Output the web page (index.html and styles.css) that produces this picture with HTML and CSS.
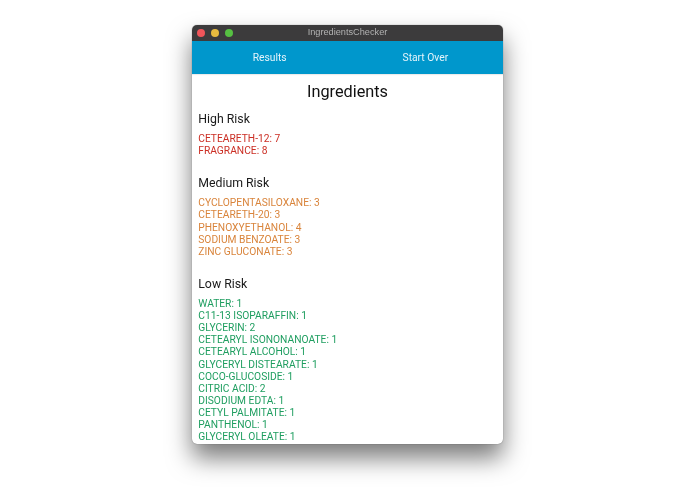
FILE: index.html
```html
<!DOCTYPE html>
<html lang="en">
<head>
<meta charset="utf-8">
<title>IngredientsChecker</title>
<link rel="stylesheet" href="styles.css">
</head>
<body>
<div class="window">
  <header class="titlebar">
    <div class="lights">
      <span class="light red"></span>
      <span class="light yellow"></span>
      <span class="light green"></span>
    </div>
    <div class="title">IngredientsChecker</div>
  </header>
  <nav class="nav">
    <a class="tab">Results</a>
    <a class="tab">Start Over</a>
  </nav>
  <main class="content">
    <h1 class="heading">Ingredients</h1>
    <section class="group high">
      <h2>High Risk</h2>
      <ul>
        <li>CETEARETH-12: 7</li>
        <li>FRAGRANCE: 8</li>
      </ul>
    </section>
    <section class="group medium">
      <h2>Medium Risk</h2>
      <ul>
        <li>CYCLOPENTASILOXANE: 3</li>
        <li>CETEARETH-20: 3</li>
        <li>PHENOXYETHANOL: 4</li>
        <li>SODIUM BENZOATE: 3</li>
        <li>ZINC GLUCONATE: 3</li>
      </ul>
    </section>
    <section class="group low">
      <h2>Low Risk</h2>
      <ul>
        <li>WATER: 1</li>
        <li>C11-13 ISOPARAFFIN: 1</li>
        <li>GLYCERIN: 2</li>
        <li>CETEARYL ISONONANOATE: 1</li>
        <li>CETEARYL ALCOHOL: 1</li>
        <li>GLYCERYL DISTEARATE: 1</li>
        <li>COCO-GLUCOSIDE: 1</li>
        <li>CITRIC ACID: 2</li>
        <li>DISODIUM EDTA: 1</li>
        <li>CETYL PALMITATE: 1</li>
        <li>PANTHENOL: 1</li>
        <li>GLYCERYL OLEATE: 1</li>
      </ul>
    </section>
  </main>
</div>
</body>
</html>
```
FILE: styles.css
```css
html, body {
  margin: 0;
  height: 100%;
  background: #fff;
  overflow: hidden;
}
body {
  display: flex;
  justify-content: center;
  align-items: flex-start;
  padding: 25px 0 0 0;
  box-sizing: border-box;
  font-family: Roboto, "Liberation Sans", sans-serif;
}
.window {
  width: 311.5px;
  height: 419px;
  border-radius: 5px;
  overflow: hidden;
  background: #fff;
  display: flex;
  flex-direction: column;
  box-shadow: 0 0 1px rgba(0,0,0,.6), 0 14px 24px rgba(0,0,0,.52);
  filter: blur(.25px);
}
.titlebar {
  flex: 0 0 15.5px;
  display: flex;
  align-items: center;
  background: #3c3b3c;
  position: relative;
}
.lights {
  display: flex;
  gap: 6px;
  padding-left: 5px;
}
.light {
  width: 8px;
  height: 8px;
  border-radius: 50%;
}
.red { background: #f0555a; }
.yellow { background: #e8bb3f; }
.green { background: #56c042; }
.title {
  position: absolute;
  inset: 0;
  text-align: center;
  font-size: 9.2px;
  line-height: 15.5px;
  color: #b2b2b2;
  font-family: "Liberation Sans", sans-serif;
}
.nav {
  flex: 0 0 33px;
  display: flex;
  background: #0097cc;
  box-shadow: 0 1px 1px rgba(0,0,0,.08);
}
.tab {
  flex: 1;
  text-align: center;
  font-size: 10.3px;
  line-height: 33px;
  color: #e4f4fb;
}
.content {
  flex: 1;
  min-height: 0;
  overflow: hidden;
  padding: 0 6.5px;
  color: #1a1a1a;
}
.heading {
  margin: 8.5px 0 0;
  font-size: 16.3px;
  line-height: 20px;
  font-weight: 400;
  text-align: center;
  color: #111;
}
.group {
  margin-bottom: 17.7px;
}
.group h2 {
  margin: 0;
  font-size: 12.3px;
  line-height: 16px;
  font-weight: 400;
}
.heading + .group { margin-top: 8.5px; }
.group ul {
  list-style: none;
  margin: 6.5px 0 0;
  padding: 0;
  font-size: 10.25px;
  line-height: 12.1px;
}
.high ul { color: #cb2f25; }
.medium ul { color: #d9843b; }
.low ul { color: #1f9e60; }
```
